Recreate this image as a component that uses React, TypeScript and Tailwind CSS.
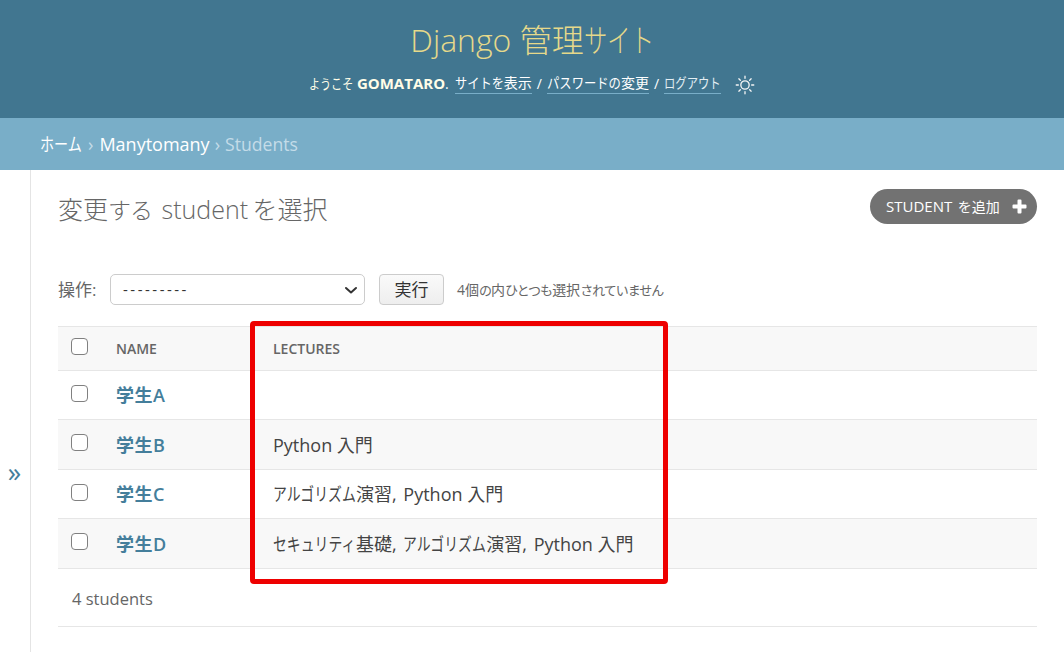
import React from "react";

function Sun() {
  return (
    <svg width="20" height="20" viewBox="0 0 24 24" fill="none" stroke="#f5f5f5" strokeWidth="1.6" strokeLinecap="round">
      <circle cx="12" cy="12" r="5" />
      <path d="M12 1.5v2.5M12 20v2.5M1.5 12h2.5M20 12h2.5M4.6 4.6l1.8 1.8M17.6 17.6l1.8 1.8M4.6 19.4l1.8-1.8M17.6 6.4l1.8-1.8" />
    </svg>
  );
}

function Box({ className = "" }: { className?: string }) {
  return <span className={"block w-[17px] h-[17px] rounded-[4px] border-[1.5px] border-[#808080] bg-white " + className} />;
}

// The reference's Japanese face sets kana narrower than kanji: same height, condensed width.
const N = ({ className, children }: { className: string; children: React.ReactNode }) => (
  <span className={"inline-block origin-left whitespace-nowrap " + className}>{children}</span>
);
const Sm = ({ children }: { children: React.ReactNode }) => (
  <span className="text-[13px] tracking-[-1px]">{children}</span>
);
const Algo = () => <N className="w-[83px] scale-x-[0.77]">アルゴリズム</N>;
const Sec = () => <N className="w-[83px] scale-x-[0.77]">セキュリティ</N>;
const Comma = () => <span className="mr-[2px]">,</span>;

const rows = [
  { name: "学生A", lectures: null, h: "h-[49px]", bg: "bg-white" },
  { name: "学生B", lectures: <>Python 入門</>, h: "h-[50px]", bg: "bg-[#f8f8f8]" },
  { name: "学生C", lectures: <><Algo />演習<Comma /> Python 入門</>, h: "h-[49px]", bg: "bg-white" },
  { name: "学生D", lectures: <><Sec />基礎<Comma /> <Algo />演習<Comma /> Python 入門</>, h: "h-[50px]", bg: "bg-[#f8f8f8]" },
];

export default function App() {
  return (
    <div className="relative w-[1064px] h-[652px] overflow-hidden bg-white text-[#333] font-['Open_Sans','Noto_Sans_CJK_JP',sans-serif]">
      <header className="h-[118px] bg-[#417690] flex flex-col items-center">
        <h1 className="mt-[18px] text-[32px] leading-[44px] font-light text-[#e6d98a] whitespace-nowrap">
          Django 管理<N className="w-[70px] scale-x-[0.73]">サイト</N>
        </h1>
        <div className="mt-[9px] flex items-center h-[24px] text-[14px] text-white whitespace-nowrap">
          <N className="w-[44px] scale-x-[0.79] text-[#fffde8]">ようこそ</N>
          <strong className="ml-[4px] text-[15px] font-bold text-[#fffde8]">GOMATARO</strong>
          <span>.</span>
          <a className="ml-[6px] border-b border-[#79aec8] leading-[20px]"><N className="w-[49px] scale-x-[0.875]">サイトを</N>表示</a>
          <span className="mx-[5px]">/</span>
          <a className="border-b border-[#79aec8] leading-[20px]"><N className="w-[74px] scale-x-[0.88]">パスワードの</N>変更</a>
          <span className="mx-[5px]">/</span>
          <a className="border-b border-[#79aec8] leading-[20px] text-[#e3eef3]"><N className="w-[57px] scale-x-[0.81]">ログアウト</N></a>
          <span className="ml-[14px] mt-[4px]"><Sun /></span>
        </div>
      </header>

      <nav className="h-[52px] bg-[#79aec8] flex items-center pl-[40px] text-[18px] text-[#c4dce8] whitespace-nowrap">
        <a className="text-white"><N className="w-[42px] scale-x-[0.78]">ホーム</N></a>
        <span className="mx-[6px]">›</span>
        <a className="text-white">Manytomany</a>
        <span className="mx-[5px]">›</span>
        <span className="text-[17.6px]">Students</span>
      </nav>

      <div className="flex h-[482px]">
        <aside className="w-[31px] shrink-0 border-r border-[#e4e4e4] flex justify-center items-start pt-[285px]">
          <span className="text-[#447e9b] text-[27px] leading-[34px] mr-[1px]">»</span>
        </aside>
        <main className="flex-1 pl-[27px] pr-[27px]">
          <div className="flex items-start justify-between pt-[19px]">
            <h2 className="text-[25px] leading-[40px] font-light text-[#666] whitespace-nowrap">
              変更<span className="text-[23px] tracking-[-1px]">する</span>
              <span className="ml-[3px] -mr-[2px]"> student </span>を選択
            </h2>
            <a className="h-[35px] w-[167px] rounded-full bg-[#727272] text-white text-[14px] flex items-center pl-[16px] pr-[10px] justify-between whitespace-nowrap">
              <span><span className="text-[15px]">STUDENT</span> <span className="ml-[2px]">を追加</span></span>
              <svg width="15" height="15" viewBox="0 0 15 15" fill="#fff"><path d="M5.5 1.5a1 1 0 0 1 1-1h2a1 1 0 0 1 1 1v4h4a1 1 0 0 1 1 1v2a1 1 0 0 1-1 1h-4v4a1 1 0 0 1-1 1h-2a1 1 0 0 1-1-1v-4h-4a1 1 0 0 1-1-1v-2a1 1 0 0 1 1-1h4z" /></svg>
            </a>
          </div>

          <div className="mt-[44px] h-[32px] flex items-center text-[#666]">
            <label className="text-[17px] w-[52px] whitespace-nowrap">操作:</label>
            <div className="self-start w-[255px] h-[31px] rounded-[5px] border border-[#ccc] bg-white flex items-center justify-between pl-[12px] pr-[5px] text-[#333] text-[15px]">
              <span className="tracking-[2.5px]">---------</span>
              <svg width="16" height="16" viewBox="0 0 16 16" fill="none" stroke="#333" strokeWidth="2" strokeLinecap="round" strokeLinejoin="round"><path d="M3 6l5 4.5L13 6" /></svg>
            </div>
            <button className="self-start ml-[14px] w-[65px] h-[31px] rounded-[4px] border border-[#ccc] bg-gradient-to-b from-[#fafafa] to-[#eeeeee] text-[#333] text-[17px]">実行</button>
            <span className="ml-[13px] text-[14px] text-[#666] whitespace-nowrap">4個<Sm>の</Sm>内<Sm>ひとつも</Sm>選択<Sm>されていません</Sm></span>
          </div>

          <table className="mt-[20px] w-full border-collapse table-fixed">
            <thead>
              <tr className="h-[44px] bg-[#f8f8f8] border-y border-[#e6e6e6] text-left text-[14px] text-[#666]">
                <th className="w-[58px] pl-[13px]"><Box className="-mt-[5px]" /></th>
                <th className="w-[157px] font-semibold">NAME</th>
                <th className="font-semibold">LECTURES</th>
              </tr>
            </thead>
            <tbody>
              {rows.map((r) => (
                <tr key={r.name} className={r.h + " " + r.bg + " border-b border-[#e6e6e6]"}>
                  <td className="pl-[13px]"><Box className="-mt-[4px]" /></td>
                  <td className="pt-[1px] text-[18px] font-semibold text-[#447e9b] tracking-[0.5px]">{r.name}</td>
                  <td className="pt-[1px] text-[18px] text-[#444] whitespace-nowrap">{r.lectures}</td>
                </tr>
              ))}
            </tbody>
          </table>

          <div className="h-[58px] flex items-center pl-[14px] pt-[3px] border-b border-[#e6e6e6] text-[16.5px] text-[#666]">4 students</div>
        </main>
      </div>

      <div className="absolute left-[250px] top-[321px] w-[418px] h-[263px] border-[5.5px] border-[#ee0000] rounded-[4px] pointer-events-none" />
    </div>
  );
}
